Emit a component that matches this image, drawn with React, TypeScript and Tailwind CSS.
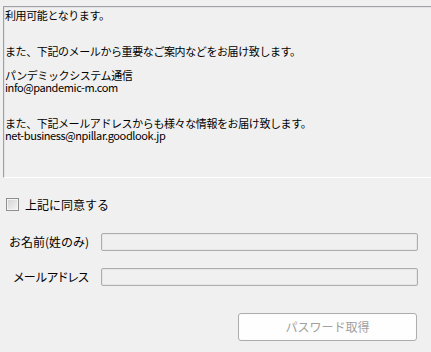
const jp = "font-['Noto_Sans_CJK_JP','Noto_Sans',sans-serif]";

const lines: string[] = [
  "利用可能となります。",
  "",
  "",
  "また、下記のメールから重要なご案内などをお届け致します。",
  "",
  "パンデミックシステム通信",
  "info@pandemic-m.com",
  "",
  "",
  "また、下記メールアドレスからも様々な情報をお届け致します。",
  "net-business@npillar.goodlook.jp",
];

function Field({ label, narrow }: { label: string; narrow?: boolean }) {
  return (
    <div className="flex items-center">
      <div
        className={`w-[89px] text-right text-[12px] leading-[18px] text-black ${jp} ${
          narrow ? "[font-feature-settings:'palt']" : ""
        }`}
      >
        {label}
      </div>
      <div className="ml-[12px] h-[18px] w-[317px] rounded-[2px] border border-[#adadad] bg-[#f0f0f0] shadow-[inset_0_0_0_1px_#e6e6e6]" />
    </div>
  );
}

export default function App() {
  return (
    <div className={`h-[352px] w-[431px] overflow-hidden bg-[#f0f0f0] ${jp}`}>
      {/* Notice text box */}
      <div className="pl-[3px] pt-[6px]">
        <div className="h-[172px] border-l border-t border-b border-l-[#a0a0a0] border-t-[#a0a0a6] border-b-white bg-[#f0f0f0] pl-[1px] pt-[2px] shadow-[inset_1px_1px_0_#e3e3e3]">
          {lines.map((l, i) => (
            <div key={i} className="h-[12px] whitespace-nowrap text-[11px] leading-[12px] tracking-[-0.4px] text-black">
              {l}
            </div>
          ))}
        </div>
      </div>

      {/* Agree checkbox */}
      <div className="mt-[20px] flex items-center pl-[6px]">
        <div className="h-[13px] w-[13px] border border-[#8e8f8f] bg-gradient-to-br from-[#d2d2d2] to-[#f6f6f6] shadow-[inset_0_0_0_1px_#f4f4f4]" />
        <span className="ml-[6px] text-[12px] leading-[13px] text-black">上記に同意する</span>
      </div>

      {/* Form */}
      <div className="mt-[22px] flex flex-col gap-[17px]">
        <Field label="お名前(姓のみ)" />
        <Field label="メールアドレス" narrow />
      </div>

      <div className="mt-[27px] flex justify-end pr-[14px]">
        <button
          disabled
          className="flex h-[28px] w-[179px] items-center justify-center rounded-[3px] border border-[#adadad] bg-[#f4f4f4] bg-[radial-gradient(#ffffff_0.7px,transparent_0.8px)] bg-[length:2px_2px] text-[12px] text-[#a0a0a0] shadow-[inset_0_0_0_1px_#fcfcfc]"
        >
          パスワード取得
        </button>
      </div>
    </div>
  );
}
